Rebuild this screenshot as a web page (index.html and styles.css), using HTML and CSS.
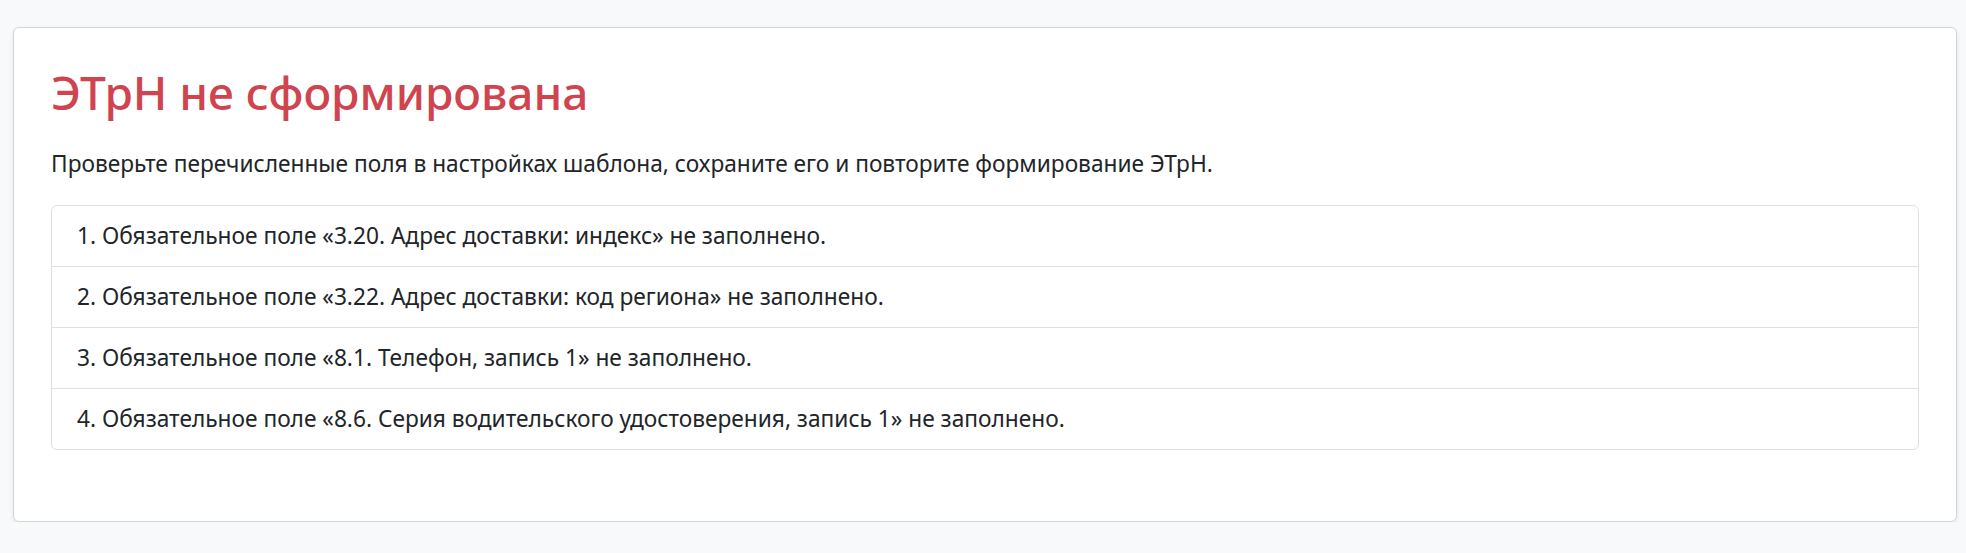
FILE: index.html
```html
<!DOCTYPE html>
<html lang="ru">
<head>
    <meta charset="UTF-8">
    <meta name="viewport" content="width=device-width, initial-scale=1.0">
    <title>ЭТрН не сформирована</title>
    <link rel="stylesheet" href="styles.css">
</head>
<body>
    <div class="card">
        <h1 class="card-title">ЭТрН не сформирована</h1>
        <p class="card-text">Проверьте перечисленные поля в настройках шаблона, сохраните его и повторите формирование ЭТрН.</p>
        <ul class="error-list">
            <li class="error-item">1. Обязательное поле «3.20. Адрес доставки: индекс» не заполнено.</li>
            <li class="error-item">2. Обязательное поле «3.22. Адрес доставки: код региона» не заполнено.</li>
            <li class="error-item">3. Обязательное поле «8.1. Телефон, запись 1» не заполнено.</li>
            <li class="error-item">4. Обязательное поле «8.6. Серия водительского удостоверения, запись 1» не заполнено.</li>
        </ul>
    </div>
</body>
</html>
```
FILE: styles.css
```css
body {
    margin: 0;
    padding: 27px 9px 0 13px;
    background: #f8f9fa;
    font-family: "Noto Sans", "Open Sans", sans-serif;
    font-size: 22.7px;
    line-height: 30px;
    color: #212529;
}

.card {
    background: #fff;
    border: 1px solid #d3d4d6;
    border-radius: 6px;
    box-shadow: 0 2px 5px rgba(0, 0, 0, 0.08);
    padding: 37px;
}

.card-title {
    margin: 0 0 29px 0;
    font-size: 46px;
    font-weight: 500;
    line-height: 1.2;
    color: #cf444e;
}

.card-text {
    margin: 0 0 26px 0;
}

.error-list {
    list-style: none;
    margin: 0 0 34px 0;
    padding: 0;
    border: 1px solid #dfe0e3;
    border-radius: 6px;
}

.error-item {
    padding: 15px 25px;
    border-top: 1px solid #dfe0e3;
}

.error-item:first-child {
    border-top: none;
}
```
